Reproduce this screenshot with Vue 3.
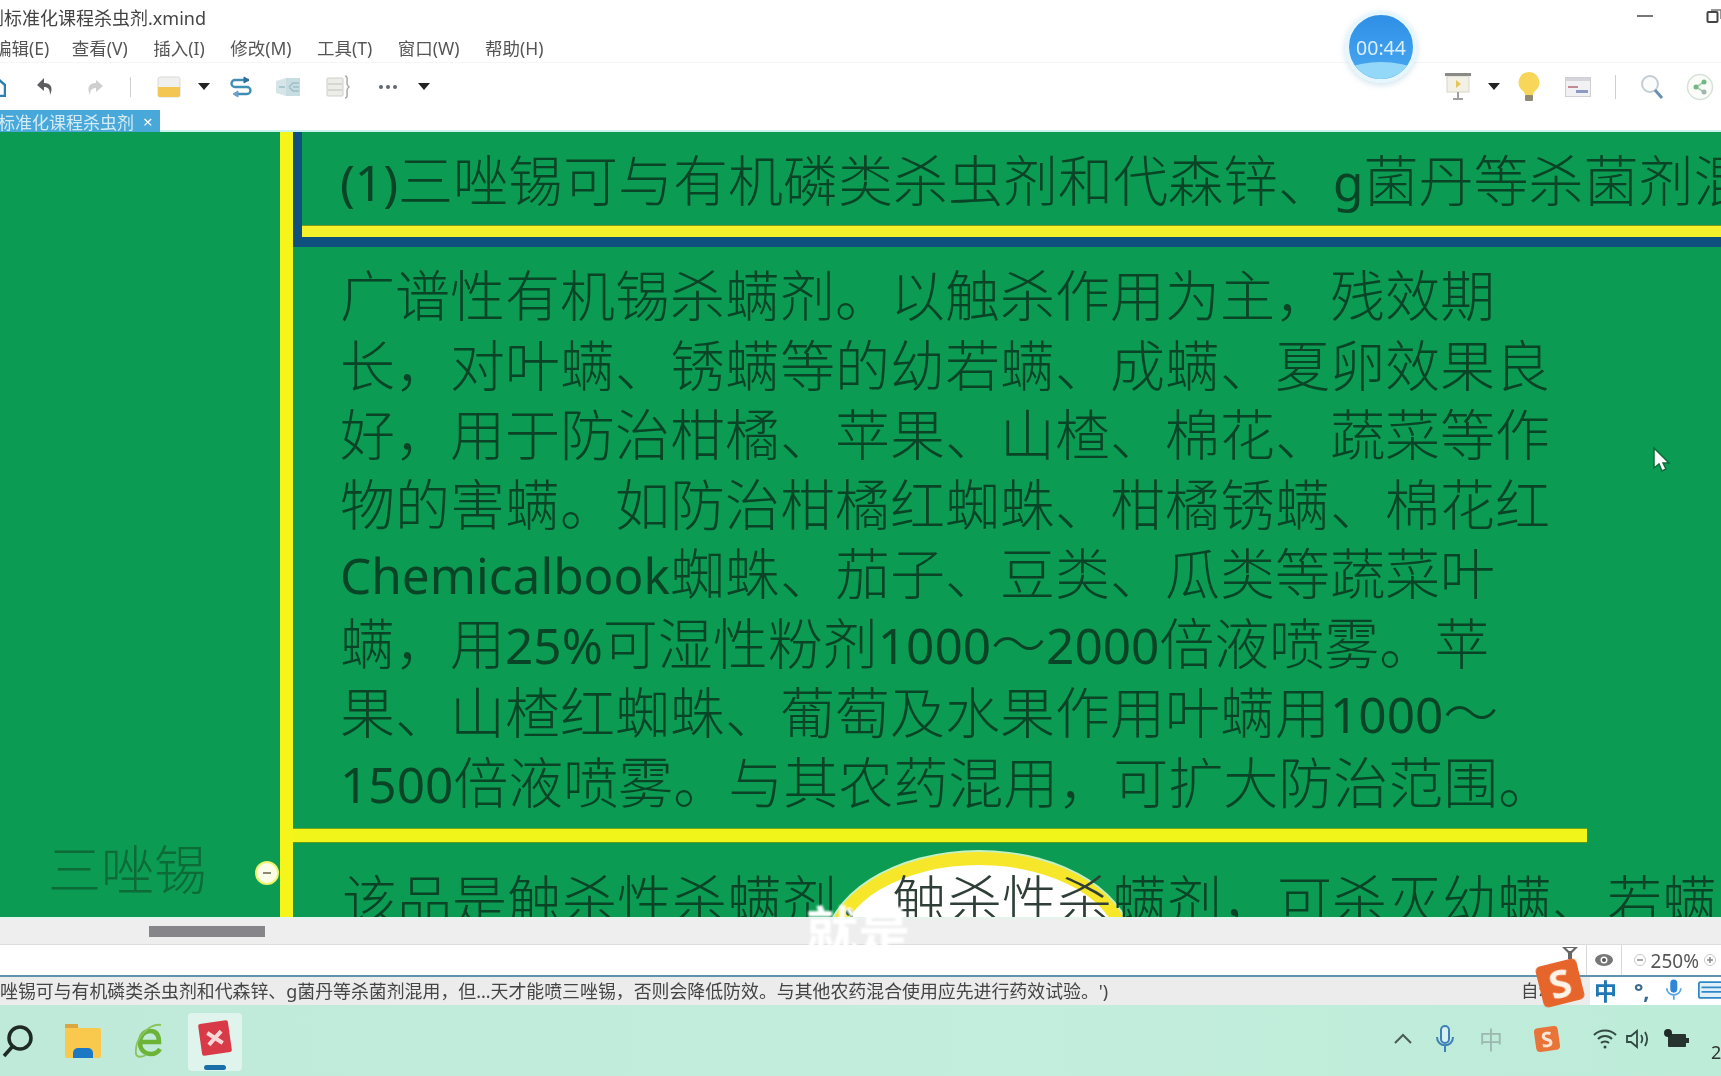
<template>
  <div class="app">
    <!-- title bar -->
    <div class="titlebar">
      <span class="title">虫剂标准化课程杀虫剂.xmind</span>
      <svg class="win-min" width="16" height="2"><rect width="16" height="2" fill="#777" /></svg>
      <svg class="win-max" width="16" height="14" viewBox="0 0 16 14">
        <rect x="1.5" y="3" width="10" height="10" rx="1" fill="#fff" stroke="#444" stroke-width="2" />
        <path d="M5 1h10v9" fill="none" stroke="#777" stroke-width="1.5" />
      </svg>
    </div>

    <!-- menu -->
    <div class="menubar">
      <span v-for="m in menus" :key="m" class="menu-item">{{ m }}</span>
    </div>

    <!-- toolbar -->
    <div class="toolbar">
      <svg class="t-home" width="12" height="20" viewBox="0 0 12 20">
        <path d="M-6 8 3 1l8 7v11H-6z" fill="#fff" stroke="#2c7fb0" stroke-width="2.5" />
      </svg>
      <svg class="t-undo" width="18" height="20" viewBox="0 0 18 20">
        <path d="M8 1 1 8l7 6v-4c4 0 6 2 6 8 3-6 2-12-6-12z" fill="#5d5d60" />
      </svg>
      <svg class="t-redo" width="18" height="20" viewBox="0 0 18 20">
        <path d="M10 3l7 6-7 6v-4c-4 0-6 2-6 7-3-6-2-12 6-12z" fill="#cfcfd0" />
      </svg>
      <i class="t-sep sep-a"></i>
      <svg class="t-folder" width="24" height="22" viewBox="0 0 24 22">
        <rect x="1" y="1" width="22" height="20" rx="2" fill="#f0f0ee" stroke="#d9d9d6" />
        <path d="M1 11h22v8a2 2 0 0 1-2 2H3a2 2 0 0 1-2-2z" fill="#f3c552" />
      </svg>
      <i class="caret caret-a"></i>
      <svg class="t-swap" width="24" height="24" viewBox="0 0 24 24" fill="none" stroke-width="2.4">
        <path d="M20 5H6a3.500 3.500 0 0 0 0 7h12a3.500 3.500 0 0 1 0 7H6" stroke="#3f8fb4" />
        <path d="M15 2l5 3-5 3z" fill="#2f6f98" stroke="#2f6f98" stroke-width="1" />
        <path d="M9 16l-5 3 5 3z" fill="#6a9ecb" stroke="#6a9ecb" stroke-width="1" />
      </svg>
      <svg class="t-map" width="26" height="22" viewBox="0 0 26 22">
        <path d="M1 5l10-3v18L1 17z" fill="#d6e6e8" />
        <rect x="11" y="2" width="14" height="18" fill="#c7dde1" />
        <path d="M4 11h6M14 11l4-4h6M18 11h6M14 11l4 4h6" stroke="#9dbfc8" fill="none" stroke-width="1.500" />
      </svg>
      <svg class="t-list" width="25" height="26" viewBox="0 0 25 26" fill="none">
        <rect x="1" y="4" width="16" height="18" rx="1" fill="#ecece8" stroke="#cfcfca" />
        <path d="M2 10h14M2 16h14" stroke="#cfcfca" stroke-width="1.500" />
        <path d="M19 2c3 0 2 4 2 7s1 3 2 4c-1 1-2 1-2 4s1 7-2 7" stroke="#a8a8a4" stroke-width="1.500" />
      </svg>
      <svg class="t-dots" width="20" height="6" viewBox="0 0 20 6" fill="#5f6770">
        <circle cx="3" cy="3" r="2" /><circle cx="10" cy="3" r="2" /><circle cx="17" cy="3" r="2" />
      </svg>
      <i class="caret caret-b"></i>

      <svg class="t-show" width="26" height="28" viewBox="0 0 26 28">
        <rect x="2" y="3" width="22" height="16" fill="#f3f1e6" stroke="#d8d6c8" />
        <rect x="0" y="0" width="26" height="3" fill="#8a8a88" />
        <path d="M11 7l5 4-5 4z" fill="#e6c65a" />
        <path d="M13 19v6M8 26h10" stroke="#a0a0a0" stroke-width="2" />
      </svg>
      <i class="caret caret-c"></i>
      <svg class="t-bulb" width="24" height="32" viewBox="0 0 24 32">
        <path d="M12 1a10.500 10.500 0 0 0-6 19c1.500 1.200 2 2.500 2 4h8c0-1.500.500-2.800 2-4a10.500 10.500 0 0 0-6-19z" fill="#f8d65a" />
        <rect x="8" y="24" width="8" height="6" rx="1" fill="#8f8a72" />
      </svg>
      <svg class="t-card" width="26" height="20" viewBox="0 0 26 20">
        <rect x=".5" y=".5" width="25" height="19" fill="#f1f0f3" stroke="#cfcfd6" />
        <rect x="1" y="1" width="24" height="3" fill="#d4d4da" />
        <rect x="3" y="9" width="10" height="2" fill="#c48a94" />
        <rect x="11" y="13" width="12" height="3" fill="#8e9bc0" />
      </svg>
      <i class="t-sep sep-b"></i>
      <svg class="t-search" width="24" height="26" viewBox="0 0 24 26" fill="none">
        <circle cx="10" cy="10" r="8" stroke="#c4cdd2" stroke-width="2" fill="#fafcfc" />
        <path d="M15 16l7 8" stroke="#6b8fb0" stroke-width="3" />
      </svg>
      <svg class="t-share" width="28" height="28" viewBox="0 0 28 28" fill="none">
        <circle cx="14" cy="14" r="12.500" stroke="#d7e2d6" stroke-width="1.500" fill="#fafcfa" />
        <path d="M18 9l-8 5 8 5" stroke="#a6cdae" stroke-width="1.500" />
        <circle cx="18" cy="9" r="2.500" fill="#6fb884" /><circle cx="10" cy="14" r="2.500" fill="#6fb884" /><circle cx="18" cy="19" r="2.500" fill="#a2b6ae" />
      </svg>
    </div>

    <!-- tab -->
    <div class="tabbar">
      <div class="tab"><span class="tab-text">标准化课程杀虫剂</span><span class="tab-x">×</span></div>
    </div>

    <!-- mind map canvas -->
    <div class="canvas">
      <div class="side">
        <span class="root-topic">三唑锡</span>
        <span class="collapse"><i></i></span>
      </div>
      <div class="spine"></div>
      <div class="nodes">
        <div class="head-node">
          <div class="head-text">
            <template v-for="(p, i) in split(heading)" :key="i">
              <span :class="{ latin: i % 2 === 1 }">{{ p }}</span>
            </template>
          </div>
        </div>
        <div class="head-rule"><i></i></div>
        <div class="body-node">
          <div v-for="(line, n) in bodyLines" :key="n" class="line">
            <template v-for="(p, i) in split(line)" :key="i">
              <span :class="{ latin: i % 2 === 1 }">{{ p }}</span>
            </template>
          </div>
        </div>
        <div class="body-rule"></div>
        <div class="next-node">
          <div class="spot"></div>
          <div class="line next-line">该品是触杀性杀螨剂，<span class="in-spot">触杀性杀</span>螨剂，可杀灭幼螨、若螨</div>
        </div>
      </div>
      <svg class="cursor" width="20" height="28" viewBox="0 0 20 28">
        <path d="M3 2v20l5-4 3 7 4-2-3-6h6z" fill="#fff" stroke="#0d6d3b" stroke-width="1.500" />
      </svg>
    </div>

    <!-- scrollbar -->
    <div class="hscroll"><div class="thumb"></div></div>

    <!-- lower status -->
    <div class="statusbar">
      <div class="zoom-tools">
        <svg class="filter" width="18" height="14" viewBox="0 0 18 14">
          <path d="M1 1h16l-6 6v6H7V7z" fill="#666" />
          <path d="M5 2h8l-3 3H8z" fill="#fff" />
        </svg>
        <i class="vbar"></i>
        <svg class="eye" width="20" height="14" viewBox="0 0 20 14">
          <ellipse cx="10" cy="7" rx="9" ry="6" fill="#777" />
          <circle cx="10" cy="7" r="3.500" fill="#fff" />
          <circle cx="10" cy="7" r="2" fill="#555" />
        </svg>
        <i class="vbar"></i>
        <svg class="zoom-btn" width="12" height="12" viewBox="0 0 12 12" fill="none">
          <circle cx="6" cy="6" r="5.500" stroke="#c8c8c8" />
          <path d="M3 6h6" stroke="#888" stroke-width="1.500" />
        </svg>
        <span class="zoom-val">250%</span>
        <svg class="zoom-btn" width="12" height="12" viewBox="0 0 12 12" fill="none">
          <circle cx="6" cy="6" r="5.500" stroke="#c8c8c8" />
          <path d="M3 6h6M6 3v6" stroke="#888" stroke-width="1.500" />
        </svg>
      </div>
    </div>

    <!-- message line -->
    <div class="message">
      <span class="msg-text">唑锡可与有机磷类杀虫剂和代森锌、g菌丹等杀菌剂混用，但...天才能喷三唑锡，否则会降低防效。与其他农药混合使用应先进行药效试验。')</span>
      <span class="msg-auto">自动</span>
      <div class="ime-bar">
        <span class="ime-zh">中</span>
        <span class="ime-dot">°,</span>
        <svg class="ime-mic" width="20" height="24" viewBox="0 0 20 24" fill="none">
          <rect x="6" y="0" width="8" height="15" rx="4" fill="#2f86d8" />
          <path d="M2 10c0 10 16 10 16 0M10 18v5" stroke="#5aa5df" stroke-width="2" />
        </svg>
        <svg class="ime-kb" width="26" height="20" viewBox="0 0 26 20" fill="none">
          <rect x="1" y="1" width="30" height="18" rx="2" stroke="#2f86c8" stroke-width="2" fill="#e2f0fa" />
          <path d="M4 7h24M4 12h24" stroke="#2f86c8" stroke-width="2" />
        </svg>
      </div>
    </div>

    <!-- taskbar -->
    <div class="taskbar">
      <svg class="task-search" width="32" height="34" viewBox="0 0 32 34" fill="none">
        <circle cx="18" cy="14" r="11" stroke="#1d2a26" stroke-width="3.500" />
        <path d="M10 23 2 32" stroke="#1d2a26" stroke-width="3.500" />
      </svg>
      <svg class="task-folder" width="36" height="34" viewBox="0 0 36 34">
        <path d="M0 2a2 2 0 0 1 2-2h9l3 4h20a2 2 0 0 1 2 2v26a2 2 0 0 1-2 2H2a2 2 0 0 1-2-2z" fill="#f9c94e" />
        <rect x="0" y="0" width="13" height="4" fill="#d9a741" />
        <path d="M8 34v-5a5 5 0 0 1 5-5h10a5 5 0 0 1 5 5v5z" fill="#1b78c4" />
      </svg>
      <svg class="task-ie" width="32" height="36" viewBox="0 0 32 36" fill="none">
        <path d="M8 19h18c0-7-3-11-9-11S7 13 7 20s5 11 11 11c4 0 7-2 9-5" stroke="#6cb33a" stroke-width="4.500" />
        <path d="M28 2C18 0 1 14 3 31c1 4 6 3 10 1" stroke="#8cc45c" stroke-width="1.800" />
      </svg>
      <div class="task-xmind">
        <div class="xm-icon">
          <svg width="20" height="16" viewBox="0 0 20 16" fill="none">
            <path d="M3 2l14 12M17 2 3 14" stroke="#f6d6d6" stroke-width="4" />
          </svg>
        </div>
        <i class="running"></i>
      </div>

      <div class="tray">
        <svg class="tr-up" width="20" height="12" viewBox="0 0 20 12" fill="none">
          <path d="M2 10l8-8 8 8" stroke="#4b5a55" stroke-width="2" />
        </svg>
        <svg class="tr-mic" width="20" height="28" viewBox="0 0 20 28" fill="none">
          <rect x="6" y="1" width="8" height="17" rx="4" stroke="#3f80b8" stroke-width="2" fill="#d7f0f0" />
          <path d="M2 12c0 11 16 11 16 0M10 21v6" stroke="#3f80b8" stroke-width="2" />
        </svg>
        <span class="tr-zh">中</span>
        <span class="tr-s">S</span>
        <svg class="tr-wifi" width="24" height="22" viewBox="0 0 24 22" fill="none" stroke="#324a44" stroke-width="2">
          <path d="M1 7c6-6 16-6 22 0M5 11c4-4 10-4 14 0M8 15c2-2 6-2 8 0" />
          <circle cx="12" cy="19" r="1.500" fill="#324a44" stroke="none" />
        </svg>
        <svg class="tr-vol" width="24" height="22" viewBox="0 0 24 22" fill="none" stroke="#324a44" stroke-width="1.800">
          <path d="M1 8v6h4l6 5V3L5 8z" />
          <path d="M15 7c2 3 2 5 0 8M19 4c3 5 3 9 0 14" />
        </svg>
        <svg class="tr-bat" width="26" height="22" viewBox="0 0 26 22">
          <rect x="4" y="6" width="18" height="13" rx="1" fill="#26332f" />
          <rect x="22" y="10" width="3" height="5" fill="#26332f" />
          <circle cx="4" cy="5" r="4" fill="#1f2a27" />
        </svg>
        <span class="tr-clock">2</span>
      </div>
    </div>

    <!-- overlays: recorder timer, ime logo, subtitle -->
    <div class="timer">
      <div class="wave"></div>
      <span>00:44</span>
    </div>
    <div class="sogou">S</div>
    <div class="subtitle">就是</div>
  </div>
</template>

<script setup>
const menus = ['编辑(E)', '查看(V)', '插入(I)', '修改(M)', '工具(T)', '窗口(W)', '帮助(H)']

const heading = '(1)三唑锡可与有机磷类杀虫剂和代森锌、g菌丹等杀菌剂混'

const bodyLines = [
  '广谱性有机锡杀螨剂。以触杀作用为主，残效期',
  '长，对叶螨、锈螨等的幼若螨、成螨、夏卵效果良',
  '好，用于防治柑橘、苹果、山楂、棉花、蔬菜等作',
  '物的害螨。如防治柑橘红蜘蛛、柑橘锈螨、棉花红',
  'Chemicalbook蜘蛛、茄子、豆类、瓜类等蔬菜叶',
  '螨，用25%可湿性粉剂1000～2000倍液喷雾。苹',
  '果、山楂红蜘蛛、葡萄及水果作用叶螨用1000～',
  '1500倍液喷雾。与其农药混用，可扩大防治范围。',
]

// latin runs are set a bit smaller than the cjk text
const split = (text) => text.split(/([A-Za-z0-9%()]+)/)
</script>

<style>
html,
body {
  margin: 0;
  overflow: hidden;
  background: #fff;
}
</style>

<style scoped>
.app {
  position: relative;
  width: 1721px;
  height: 1076px;
  overflow: hidden;
  display: flex;
  flex-direction: column;
  background: #fff;
  font-family: "Noto Sans", "Noto Sans CJK SC", sans-serif;
  color: #444;
}

/* title + menu */
.titlebar {
  height: 33px;
  display: flex;
  align-items: center;
  overflow: hidden;
  filter: blur(0.5px);
}
.title {
  margin-left: -32px;
  font-size: 18px;
  color: #444;
}
.win-min {
  margin-left: auto;
  margin-top: -2px;
}
.win-max {
  margin-left: 53px;
  margin-right: -1px;
  margin-top: -2px;
}
.menubar {
  height: 29px;
  display: flex;
  align-items: center;
  gap: 25.500px;
  margin-left: -9px;
  font-size: 17.500px;
  color: #555;
  filter: blur(0.5px);
  white-space: nowrap;
}
.menu-item {
  flex: none;
}
.menu-item:first-child {
  margin-left: 3px;
  margin-right: -3px;
}

/* toolbar */
.toolbar {
  height: 48px;
  display: flex;
  align-items: center;
  border-top: 1px solid #f6f6f6;
  box-sizing: border-box;
  padding-right: 7px;
  filter: blur(0.6px);
}
.toolbar > * {
  flex: none;
}
.t-home { margin-left: -6px; }
.t-undo { margin-left: 30px; }
.t-redo { margin-left: 32px; }
.t-sep {
  display: block;
  width: 1px;
  height: 20px;
  background: #cfcfcf;
}
.sep-a { margin-left: 26px; }
.t-folder { margin-left: 26px; }
.caret {
  display: block;
  width: 0;
  height: 0;
  border-left: 6px solid transparent;
  border-right: 6px solid transparent;
  border-top: 7px solid #222;
}
.caret-a { margin-left: 17px; }
.t-swap { margin-left: 19px; }
.t-map { margin-left: 22px; }
.t-list { margin-left: 25px; }
.t-dots { margin-left: 27px; }
.caret-b { margin-left: 20px; }
.t-show { margin-left: auto; }
.caret-c { margin-left: 17px; }
.t-bulb { margin-left: 17px; }
.t-card { margin-left: 24px; }
.sep-b { margin-left: 24px; height: 24px; }
.t-search { margin-left: 24px; }
.t-share { margin-left: 22px; }

/* tab */
.tabbar {
  height: 22px;
  flex: none;
  box-shadow: inset 0 -2px 0 #c9f3ec;
}
.tab {
  width: 160px;
  height: 22px;
  display: flex;
  align-items: center;
  overflow: hidden;
  background: #47a8d9;
  color: #d5ecf5;
  font-size: 17px;
  filter: blur(0.5px);
}
.tab-text {
  margin-left: -2px;
  white-space: nowrap;
}
.tab-x {
  margin-left: 9px;
  color: #fff;
  font-size: 17px;
}

/* canvas */
.canvas {
  position: relative;
  height: 785px;
  flex: none;
  display: flex;
  overflow: hidden;
  background: #0b9b52;
  color: #084425;
  font-family: "Noto Sans", "Noto Sans CJK SC", sans-serif;
  font-weight: 300;
  filter: blur(0.5px);
}
.side {
  width: 280px;
  flex: none;
  display: flex;
  align-items: center;
  align-self: flex-end;
  box-sizing: border-box;
  padding: 0 1px 12px 48px;
  justify-content: space-between;
}
.root-topic {
  font-size: 53px;
  line-height: 70px;
  color: #0d6b38;
  white-space: nowrap;
}
.collapse {
  width: 24px;
  height: 24px;
  margin-top: 5px;
  border-radius: 50%;
  background: #fbfde8;
  border: 2px solid #eef56a;
  box-sizing: border-box;
  display: flex;
  align-items: center;
  justify-content: center;
}
.collapse i {
  width: 8px;
  height: 2px;
  background: #8a8a70;
}
.spine {
  width: 13px;
  flex: none;
  background: #f5f51c;
}
.nodes {
  flex: 1;
  min-width: 0;
}
.head-node {
  height: 94px;
  margin-left: 0;
  border-left: 9px solid #10507e;
  box-sizing: border-box;
  padding: 2px 0 0 38px;
  display: flex;
  align-items: center;
  white-space: nowrap;
  overflow: hidden;
}
.head-text,
.line {
  font-size: 55px;
  line-height: 69.500px;
  white-space: nowrap;
}
.latin {
  font-size: 49.500px;
  font-weight: 400;
  line-height: 1;
}
.head-rule {
  height: 21px;
  background: #10507e;
  padding-left: 9px;
  box-sizing: border-box;
}
.head-rule i {
  display: block;
  height: 11px;
  background: #f5f12a;
  box-shadow: 0 -1px 0 #7d9a1c;
}
.body-node {
  padding: 13px 0 13.400px 47px;
}
.body-rule {
  width: 1294px;
  height: 13px;
  background: #f2f51a;
  box-shadow: 0 1px 0 #5f9a1c, 0 -1px 0 #6fa51c;
}
.next-node {
  position: relative;
  padding: 23px 0 0 49px;
}
.next-line {
  position: relative;
}
.spot {
  position: absolute;
  left: 533px;
  top: 10px;
  width: 280px;
  height: 168px;
  border-radius: 50%;
  background: #fff;
  border: 13px solid #f6e72a;
  box-shadow: 0 0 0 2px #c6f0c0;
}
.in-spot {
  color: #2f3f38;
}
.cursor {
  position: absolute;
  left: 1651px;
  top: 314px;
}

/* bottom chrome */
.hscroll {
  height: 28px;
  flex: none;
  background: #efeeee;
  display: flex;
  align-items: center;
  box-shadow: inset 0 -1px 0 #dcdcdc, inset 0 2px 0 #e6f4ee;
  filter: blur(0.5px);
}
.thumb {
  width: 116px;
  height: 11px;
  margin-left: 149px;
  background: #86858a;
}
.statusbar {
  height: 30px;
  flex: none;
  display: flex;
  justify-content: flex-end;
  background: #fff;
  filter: blur(0.5px);
}
.zoom-tools {
  display: flex;
  align-items: center;
  height: 30px;
  overflow: hidden;
  font-size: 19px;
  color: #555;
}
.filter {
  margin-top: -14px;
}
.vbar {
  display: block;
  width: 1px;
  height: 30px;
  background: #d8d8d8;
  margin: 0 7px;
}
.eye {
  margin-top: 0;
}
.zoom-btn {
  margin: 0 5px 0;
}
.zoom-val {
  line-height: 30px;
  margin-top: 2px;
}
.message {
  position: relative;
  height: 30px;
  flex: none;
  display: flex;
  align-items: center;
  background: #ececec;
  border-top: 2px solid #5f93ac;
  box-sizing: border-box;
  padding-bottom: 3px;
  font-size: 17.900px;
  color: #444;
  white-space: nowrap;
  overflow: hidden;
}
.msg-text {
  filter: blur(0.5px);
}
.msg-auto {
  margin-left: auto;
  margin-right: 165px;
  font-size: 17.500px;
  filter: blur(0.5px);
}
.ime-bar {
  position: absolute;
  right: 0;
  top: -2px;
  width: 131px;
  height: 30px;
  background: #fff;
  display: flex;
  align-items: center;
  color: #1f78b4;
  filter: blur(0.4px);
}
.ime-zh {
  margin-left: 4px;
  font-size: 23px;
  font-weight: 700;
}
.ime-dot {
  margin-left: 17px;
  font-size: 22px;
  font-weight: 700;
  color: #3a6a90;
}
.ime-mic {
  margin-left: 15px;
}
.ime-kb {
  margin-left: 16px;
}

/* taskbar */
.taskbar {
  flex: 1;
  display: flex;
  align-items: center;
  background: linear-gradient(90deg, #bfeada, #c3eddc 60%, #bdecd9);
  position: relative;
}
.taskbar > svg {
  flex: none;
  filter: blur(0.5px);
}
.task-search { margin-left: 2px; }
.task-folder { margin-left: 31px; }
.task-ie { margin-left: 32px; }
.task-xmind {
  position: relative;
  margin-left: 23px;
  width: 54px;
  height: 58px;
  margin-top: 2px;
  border-radius: 4px;
  background: #def4ec;
  display: flex;
  align-items: center;
  justify-content: center;
  filter: blur(0.5px);
}
.xm-icon {
  width: 30px;
  height: 32px;
  background: #d93a48;
  border-radius: 2px;
  transform: rotate(-8deg);
  display: flex;
  align-items: center;
  justify-content: center;
  margin-top: -8px;
}
.running {
  position: absolute;
  left: 16px;
  bottom: 1px;
  width: 22px;
  height: 5px;
  border-radius: 3px;
  background: #1b6fa8;
}
.tray {
  margin-left: auto;
  display: flex;
  align-items: center;
  height: 40px;
  margin-top: -4px;
  color: #3f5750;
  filter: blur(0.5px);
}
.tr-up { margin-right: 22px; }
.tr-mic { margin-right: 24px; }
.tr-zh {
  font-size: 24px;
  color: #9db8b0;
  margin-right: 32px;
}
.tr-s {
  width: 24px;
  height: 24px;
  border-radius: 4px;
  background: #e8743a;
  color: #fbe6d6;
  font-size: 21px;
  font-weight: 700;
  line-height: 24px;
  text-align: center;
  transform: rotate(-8deg);
  margin-right: 34px;
}
.tr-vol { margin-left: 9px; }
.tr-bat { margin-left: 14px; }
.tr-clock {
  width: 10px;
  margin-left: 21px;
  margin-top: 26px;
  overflow: hidden;
  font-size: 18px;
  color: #333;
}

/* overlays */
.timer {
  position: absolute;
  left: 1345px;
  top: 11px;
  width: 72px;
  height: 72px;
  box-sizing: border-box;
  border-radius: 50%;
  border: 4px solid #e5f6fd;
  box-shadow: 0 2px 6px rgba(120, 170, 200, 0.35);
  background: linear-gradient(180deg, #2e8fe6, #4aa8f0);
  overflow: hidden;
  display: flex;
  align-items: center;
  justify-content: center;
  filter: blur(0.5px);
}
.timer span {
  position: relative;
  color: #d8efff;
  font-size: 19.500px;
  margin-top: 0;
}
.wave {
  position: absolute;
  left: -20px;
  right: -20px;
  top: 47px;
  height: 50px;
  border-radius: 50%;
  background: #93d8f8;
}
.sogou {
  position: absolute;
  left: 1539px;
  top: 962px;
  width: 42px;
  height: 42px;
  border-radius: 5px;
  background: #e6652b;
  color: #fff2e6;
  font-size: 40px;
  font-weight: 700;
  line-height: 42px;
  text-align: center;
  transform: rotate(-14deg);
  filter: blur(0.4px);
}
.subtitle {
  position: absolute;
  left: 806px;
  top: 900px;
  font-size: 52px;
  line-height: 60px;
  font-weight: 700;
  color: #fff;
  filter: blur(0.8px);
  white-space: nowrap;
}
</style>
